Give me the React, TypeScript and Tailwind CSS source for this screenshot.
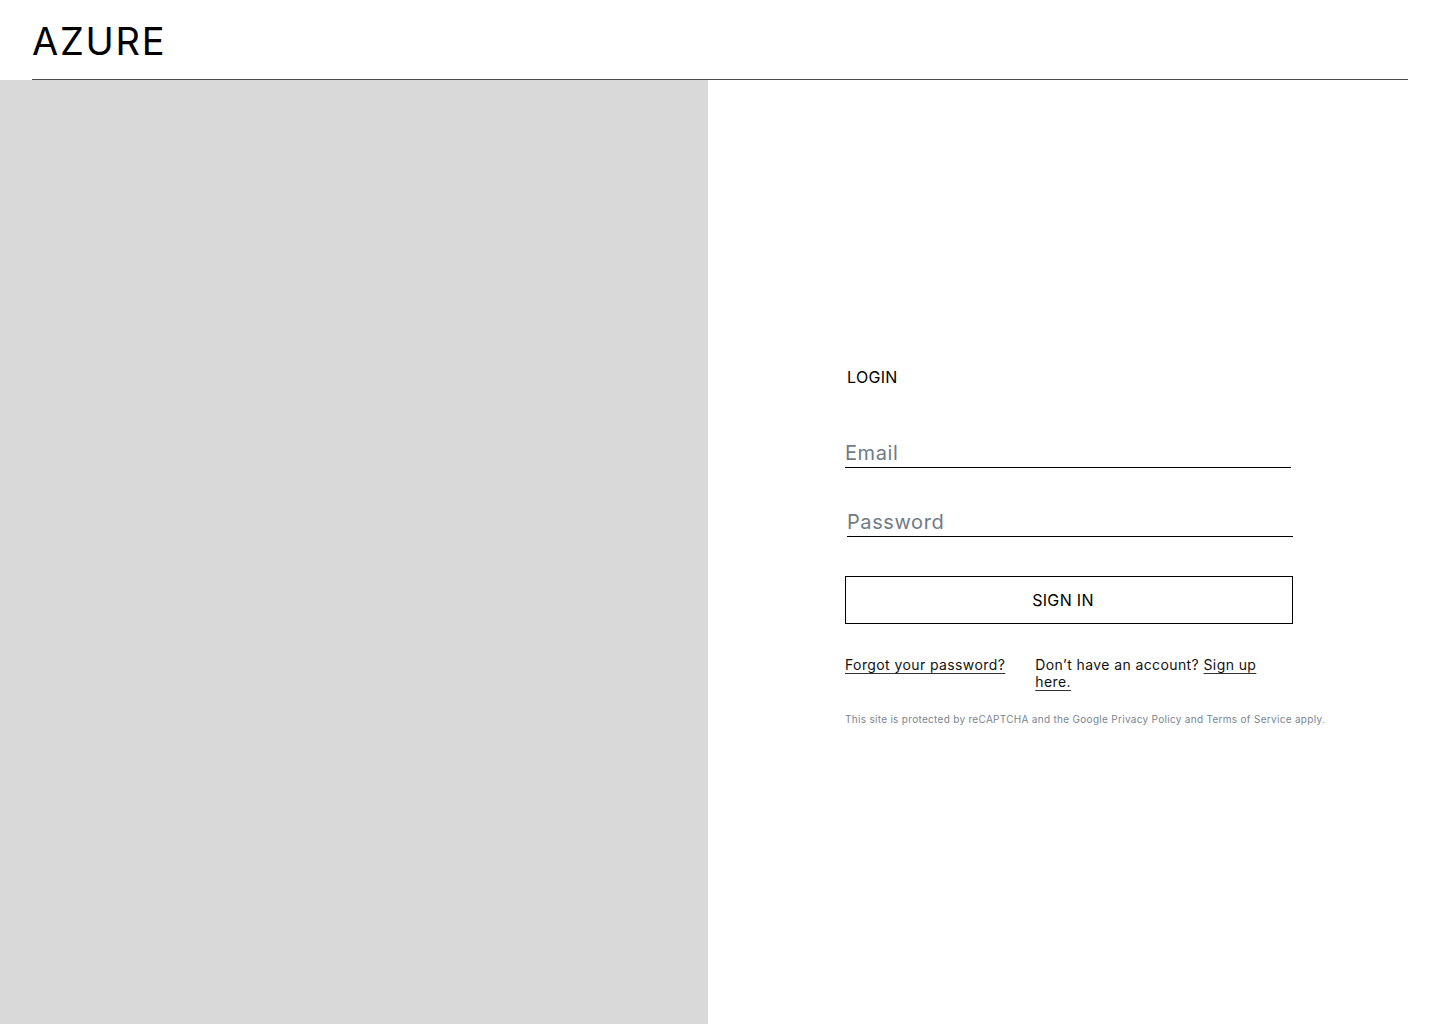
import React from 'react';

export default function App() {
  return (
    <div className="flex h-screen w-full flex-col bg-white text-black" style={{ fontFamily: 'Inter, "Noto Sans", sans-serif' }}>
      {/* Header */}
      <header className="h-[80px] shrink-0 px-8">
        <div className="flex h-full items-start border-b border-[#4a4a4a] pt-[22px]">
          <h1 className="text-[38px] font-normal leading-none tracking-[0.045em]">AZURE</h1>
        </div>
      </header>

      <div className="flex flex-1">
        {/* Image placeholder */}
        <div className="w-[708px] shrink-0 bg-[#d9d9d9]" />

        {/* Form side */}
        <div className="flex-1 pl-[137px] pt-[287px]">
          <div className="flex w-[448px] flex-col">
            <h2 className="ml-[2px] text-[16px] leading-[20px] tracking-[0.02em]">LOGIN</h2>

            <input
              type="email"
              placeholder="Email"
              className="mt-[51px] box-border h-[30px] w-[446px] border-b border-black bg-transparent p-0 text-[20px] tracking-[0.03em] outline-none placeholder:text-[#6f7b86]"
            />
            <input
              type="password"
              placeholder="Password"
              className="ml-[2px] mt-[39px] box-border h-[30px] w-[446px] border-b border-black bg-transparent p-0 text-[20px] tracking-[0.03em] outline-none placeholder:text-[#6f7b86]"
            />

            <button className="mt-[39px] h-[48px] w-[448px] border border-black bg-white pr-[12px] text-[16px] tracking-[0.02em]">
              SIGN IN
            </button>

            <div className="mt-[32px] flex gap-[30px] text-[14px] leading-[17px] tracking-[0.4px] text-[#111]">
              <a href="#" className="underline decoration-[#333] underline-offset-[3px]">Forgot your password?</a>
              <p className="w-[236px]">
                Don’t have an account?{' '}
                <a href="#" className="underline decoration-[#333] underline-offset-[3px]">Sign up here.</a>
              </p>
            </div>

            <p className="mt-[22px] whitespace-nowrap text-[10px] leading-[14px] tracking-[0.3px] text-[#7b858f]">
              This site is protected by reCAPTCHA and the Google Privacy Policy and Terms of Service apply.
            </p>
          </div>
        </div>
      </div>
    </div>
  );
}
